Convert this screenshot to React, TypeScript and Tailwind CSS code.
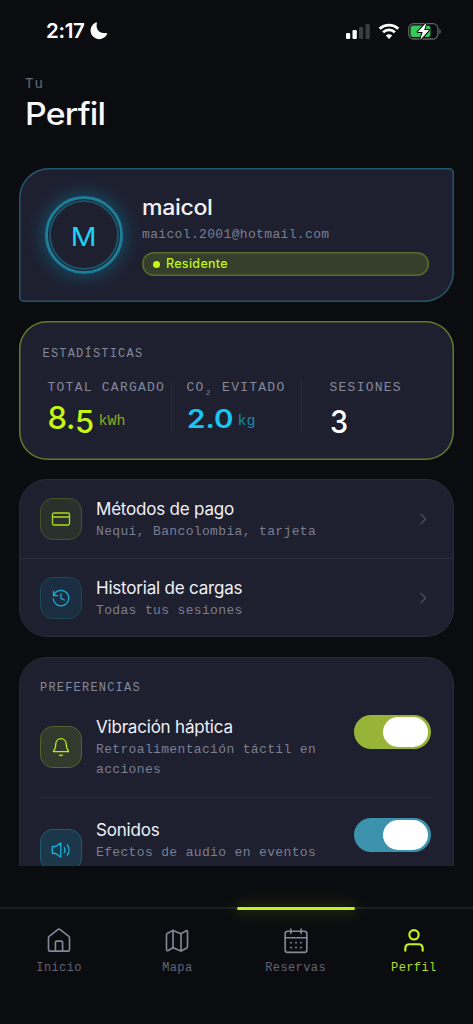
import type { ReactNode } from "react";

type Tone = "lime" | "cyan";

const mono = "font-['Liberation_Mono',monospace] whitespace-nowrap";
const sub = `${mono} relative top-px text-[13px] leading-5 tracking-[0.35px] text-[#7b7e90]`;
const section = `${mono} text-[12px] leading-4 tracking-[1.2px] text-[#858899]`;
const title = "whitespace-nowrap text-[17px] leading-6 tracking-[-0.2px] text-[#f1f1f6]";

function StatusBar() {
  return (
    <div className="flex h-[62px] items-center justify-between pl-[46px] pr-[31px]">
      <div className="flex items-center gap-[3px] text-white">
        <span className="w-[41px] whitespace-nowrap text-[20.5px] font-semibold leading-6 tracking-[-0.3px]">2:17</span>
        <svg width="18" height="18" viewBox="0 0 18 18" fill="currentColor">
          <path d="M6.900 1.200C5.400 7.400 9.600 11.900 16.300 10.900c.7-.1 1.100.3.8 1A8.600 8.600 0 1 1 5.900.6c.7-.3 1.200 0 1 .6Z" />
        </svg>
      </div>
      <svg width="98" height="20" viewBox="0 0 98 20" fill="none">
        <rect x="2" y="12" width="4.2" height="6" rx="1.2" fill="#fff" />
        <rect x="8.5" y="9" width="4.3" height="9" rx="1.2" fill="#fff" />
        <rect x="15" y="6" width="4.2" height="12" rx="1.2" fill="#3b3c40" />
        <rect x="21.5" y="3" width="4.3" height="15" rx="1.2" fill="#3b3c40" />
        <g stroke="#fff" strokeWidth="2.8">
          <path d="M35.700 7.800a13.400 13.400 0 0 1 18.600 0" />
          <path d="M39.100 11.300a8.600 8.600 0 0 1 11.800 0" />
        </g>
        <path d="M41.8 14.600a4.900 4.900 0 0 1 6.4 0L45 18Z" fill="#fff" />
        <rect x="64.7" y="2.7" width="29.2" height="15.3" rx="4.8" stroke="#606166" strokeWidth="1.3" />
        <path d="M95.3 8v5c2-.6 2-4.400 0-5Z" fill="#606166" />
        <rect x="66.500" y="4.600" width="20" height="11.500" rx="3.200" fill="#34c759" />
        <path d="M82.500 1.500 73.700 11h5l-2.500 8 9-10h-5l2.300-7.500Z" fill="#fff" stroke="#0b0c10" strokeWidth="2" strokeLinejoin="round" paintOrder="stroke" />
      </svg>
    </div>
  );
}

function Svg({ children, size = 24, width = 1.5, className = "" }: { children: ReactNode; size?: number; width?: number; className?: string }) {
  return (
    <svg
      className={className}
      width={size}
      height={size}
      viewBox="0 0 24 24"
      fill="none"
      stroke="currentColor"
      strokeWidth={width}
      strokeLinecap="round"
      strokeLinejoin="round"
    >
      {children}
    </svg>
  );
}

const CardIcon = () => (
  <Svg width={1.3}>
    <rect x="3.500" y="6" width="17" height="12" rx="1.500" />
    <path d="M3.500 10h17" />
  </Svg>
);

const HistoryIcon = () => (
  <Svg width={1.3}>
    <path d="M4.700 9.500A7.700 7.700 0 1 1 4.300 13" />
    <path d="M4.500 5.500v4.200h4.300M12 8v4.300l3.300 1.700" />
  </Svg>
);

const BellIcon = () => (
  <Svg width={1.3}>
    <path d="M4.500 16c1.800-1.800 2.200-3.500 2.300-7 .1-3.100 2.300-5.300 5.200-5.300s5.100 2.200 5.200 5.300c.1 3.500.5 5.200 2.300 7 .3.400.1.700-.4.700H4.900c-.5 0-.7-.3-.4-.7Z" />
    <path d="M10.500 20c.9.600 2.100.600 3 0" />
  </Svg>
);

const SoundIcon = () => (
  <Svg width={1.3}>
    <path d="M3.800 8.500h3l4.400-3.300c.3-.2.600 0 .600.300v13c0 .3-.3.500-.600.300l-4.400-3.300h-3c-.3 0-.5-.2-.5-.5V9c0-.3.200-.5.500-.5Z" />
    <path d="M15.300 9.500a4.500 4.500 0 0 1 0 5M18.300 7a8 8 0 0 1 0 10" />
  </Svg>
);

function Tile({ tone, strong, children }: { tone: Tone; strong?: boolean; children: ReactNode }) {
  const lime = strong ? "border-[#53632b] bg-[#303a2d] text-[#b9ec17]" : "border-[#465228] bg-[#2a312c] text-[#add91d]";
  const cyan = strong ? "border-[#215b70] bg-[#1c364a] text-[#17b7df]" : "border-[#1d4658] bg-[#1b2d40] text-[#19b0d6]";
  return (
    <div className={`flex size-[42px] shrink-0 items-center justify-center rounded-[13px] border ${tone === "lime" ? lime : cyan}`}>
      {children}
    </div>
  );
}

function ProfileCard() {
  return (
    <section className="flex h-[134px] items-center rounded-[30px_5px_30px_5px] bg-[#1e2030] pl-[26px] pr-[25px] shadow-[inset_0_0_0_1.5px_#23566d]">
      <div className="flex size-[78px] shrink-0 items-center justify-center rounded-full border-[3px] border-[#1c7e98] shadow-[0_0_18px_2px_rgba(0,185,225,0.32)]">
        <div className="flex size-[70px] items-center justify-center rounded-full border-2 border-[#1a5369] text-[26px] text-[#1ed2f7]">
          <span className="relative top-px scale-x-[1.1]">M</span>
        </div>
      </div>
      <div className="ml-[19px] flex flex-1 flex-col">
        <span className="origin-left scale-x-[1.1] text-[21px] font-medium leading-[28px] tracking-[-0.3px] text-[#f3f3f7]">maicol</span>
        <span className={`${mono} mt-[3px] text-[13px] leading-[20px] tracking-[0.35px] text-[#7b7e90]`}>maicol.2001@hotmail.com</span>
        <div className="mt-[7px] flex h-[24px] items-center gap-[6px] rounded-full bg-[#353f2b] pl-[11px] text-[12.500px] font-medium text-[#c1f516] shadow-[inset_0_0_0_1.5px_#566b29]">
          <span className="size-[7px] rounded-full bg-[#c6fa12]" />
          <span className="tracking-[0.3px]">Residente</span>
        </div>
      </div>
    </section>
  );
}

function StatsCard() {
  const label = `${mono} h-5 text-[13px] leading-5 tracking-[1.25px] text-[#858899]`;
  return (
    <section className="h-[139px] rounded-[28px] bg-[#1e2030] pl-[23.500px] pt-[25px] shadow-[inset_0_0_0_1.5px_#617a2a]">
      <h2 className={section}>ESTADÍSTICAS</h2>
      <div className="mt-[12px] flex">
        <div className="mt-[7px] h-[52px] w-[129px] border-r border-[#292b39] pl-[5px]">
          <div className={`${label} -mt-[3px]`}>TOTAL CARGADO</div>
          <div className="mt-[5px] flex h-[30px] items-end">
            <span className="flex w-[46px] text-[31px] font-medium leading-[30px] tracking-[-0.4px] text-[#c5f713]">
              <span>8.</span>
              <span className="relative top-[4px]">5</span>
            </span>
            <span className={`${mono} ml-[5px] text-[15px] leading-[22px] text-[#8aab22]`}>kWh</span>
          </div>
        </div>
        <div className="mt-[7px] h-[52px] w-[130px] border-r border-[#292b39] pl-[15px]">
          <div className={`${label} -mt-[3px]`}>
            CO<sub className="bottom-[-4px] mx-[1.500px] text-[7px]">2</sub> EVITADO
          </div>
          <div className="mt-[5px] flex h-[30px] items-end">
            <span className="w-[46px]">
              <span className="relative top-px inline-block origin-left scale-x-[1.18] text-[25px] font-semibold leading-[26px] text-[#19c6ef]">2.0</span>
            </span>
            <span className={`${mono} ml-[5px] text-[15px] leading-[22px] text-[#178aab]`}>kg</span>
          </div>
        </div>
        <div className="mt-[7px] h-[52px] pl-[28px]">
          <div className={`${label} -mt-[3px]`}>SESIONES</div>
          <div className="mt-[9px] text-[31px] font-medium leading-[30px] text-white">
            <span className="inline-block origin-left scale-x-[0.93]">3</span>
          </div>
        </div>
      </div>
    </section>
  );
}

const links: { title: string; copy: string; tone: Tone; icon: ReactNode }[] = [
  { title: "Métodos de pago", copy: "Nequi, Bancolombia, tarjeta", tone: "lime", icon: <CardIcon /> },
  { title: "Historial de cargas", copy: "Todas tus sesiones", tone: "cyan", icon: <HistoryIcon /> },
];

function LinksCard() {
  return (
    <section className="h-[158px] rounded-[28px] border border-[#292b39] bg-[#1e2030]">
      {links.map((item, i) => (
        <div key={item.title} className={`flex items-center pl-[20px] pr-[21px] ${i === 0 ? "h-[79px] border-b border-[#292b39]" : "h-[77px]"}`}>
          <Tile tone={item.tone}>{item.icon}</Tile>
          <div className="ml-[14px] flex-1">
            <div className={title}>{item.title}</div>
            <div className={sub}>{item.copy}</div>
          </div>
          <Svg size={18} width={1.800} className="text-[#4c4e5d]">
            <path d="m9 5.500 6.500 6.500L9 18.500" />
          </Svg>
        </div>
      ))}
    </section>
  );
}

function Toggle({ tone }: { tone: Tone }) {
  return (
    <div className={`mr-[2px] flex h-[34px] w-[77px] shrink-0 items-center justify-end rounded-full pr-[3px] ${tone === "lime" ? "bg-[#98b438]" : "bg-[#3c91ad]"}`}>
      <div className="h-[30px] w-[45px] rounded-full bg-white" />
    </div>
  );
}

function PreferencesCard() {
  return (
    <section className="mt-px h-[280px] rounded-[28px] border border-[#292b39] bg-[#1e2030] px-[20px] pt-[22px]">
      <h2 className={section}>PREFERENCIAS</h2>
      <div className="mt-[19px] flex h-[83px] border-b border-[#262837]">
        <div className="pt-[11px]">
          <Tile tone="lime" strong><BellIcon /></Tile>
        </div>
        <div className="ml-[14px] flex-1">
          <div className={title}>Vibración háptica</div>
          <div className={sub}>Retroalimentación táctil en<br />acciones</div>
        </div>
        <Toggle tone="lime" />
      </div>
      <div className="mt-[20px] flex">
        <div className="pt-[11px]">
          <Tile tone="cyan" strong><SoundIcon /></Tile>
        </div>
        <div className="ml-[14px] flex-1">
          <div className={title}>Sonidos</div>
          <div className={sub}>Efectos de audio en eventos</div>
        </div>
        <Toggle tone="cyan" />
      </div>
    </section>
  );
}

const tabs: { label: string; icon: ReactNode; active?: boolean }[] = [
  {
    label: "Inicio",
    icon: (
      <Svg size={26} width={1.500}>
        <path d="M2.300 9.200v10.300c0 1.200.7 1.900 1.900 1.900h15.600c1.200 0 1.900-.7 1.900-1.900V9.200c0-.7-.3-1.300-.9-1.700l-7.700-6c-.7-.5-1.500-.5-2.200 0l-7.700 6c-.6.400-.9 1-.9 1.700Z" />
        <path d="M8.700 21.400v-8.200c0-.7.4-1.100 1.100-1.100h4.400c.7 0 1.100.4 1.100 1.100v8.200" />
      </Svg>
    ),
  },
  {
    label: "Mapa",
    icon: (
      <Svg size={26} width={1.500}>
        <path d="m8.300 2.200-5 2.600c-.8.400-1 .8-1 1.600v13.500c0 1 .6 1.400 1.500.9l4.500-2.500 7.400 3 5-2.600c.7-.4 1-.8 1-1.600V3.600c0-1-.6-1.400-1.500-.9l-4.500 2.500-7.400-3Z" />
        <path d="M8.300 2.200v16.100M15.700 5.200v16.100" />
      </Svg>
    ),
  },
  {
    label: "Reservas",
    icon: (
      <Svg size={26} width={1.500}>
        <rect x="2" y="3" width="20" height="19.500" rx="2.300" />
        <path d="M2 9h20M7.200 1v4M16.800 1v4" />
        <path d="M7.500 13.500h.01M12 13.500h.01M16.500 13.500h.01M7.500 18h.01M12 18h.01M16.500 18h.01" strokeWidth="1.800" />
      </Svg>
    ),
  },
  {
    label: "Perfil",
    active: true,
    icon: (
      <Svg size={26} width={2}>
        <circle cx="12" cy="6.300" r="4.300" />
        <path d="M4 21v-2c0-2.500 1.500-4 4-4h8c2.500 0 4 1.500 4 4v2" />
      </Svg>
    ),
  },
];

function TabBar() {
  return (
    <nav className="relative grid h-[117px] grid-cols-4 border-t-2 border-[#1c1d22]">
      <span className="absolute -top-[2px] left-[236.500px] h-[3px] w-[118px] rounded-full bg-[#c1f21c] shadow-[0_0_16px_3px_rgba(190,245,10,0.16)]" />
      {tabs.map((tab) => (
        <div key={tab.label} className={`flex flex-col items-center pt-[19px] ${tab.active ? "text-[#c3f41f]" : "text-[#85879a]"}`}>
          {tab.icon}
          <span className={`${mono} mt-[6px] text-[12px] leading-4 tracking-[0.4px] ${tab.active ? "text-[#b2dc26]" : "text-[#626475]"}`}>
            {tab.label}
          </span>
        </div>
      ))}
    </nav>
  );
}

export default function App() {
  return (
    <div className="flex h-[1024px] w-[473px] flex-col overflow-hidden bg-[#0b0c10] font-['Inter',sans-serif]">
      <StatusBar />
      <header className="h-[106px] pl-[25px] pt-[13px]">
        <div className={`${mono} text-[14px] leading-[18px] tracking-[1px] text-[#666978]`}>Tu</div>
        <h1 className="mt-[2px] origin-left scale-x-[1.09] text-[31px] font-medium leading-[38px] tracking-[-0.7px] text-[#f8f8fb]">Perfil</h1>
      </header>
      <main className="flex h-[698px] flex-col gap-[19px] overflow-hidden px-[19px] [&>section]:shrink-0">
        <ProfileCard />
        <StatsCard />
        <LinksCard />
        <PreferencesCard />
      </main>
      <div className="h-[41px]" />
      <TabBar />
    </div>
  );
}
